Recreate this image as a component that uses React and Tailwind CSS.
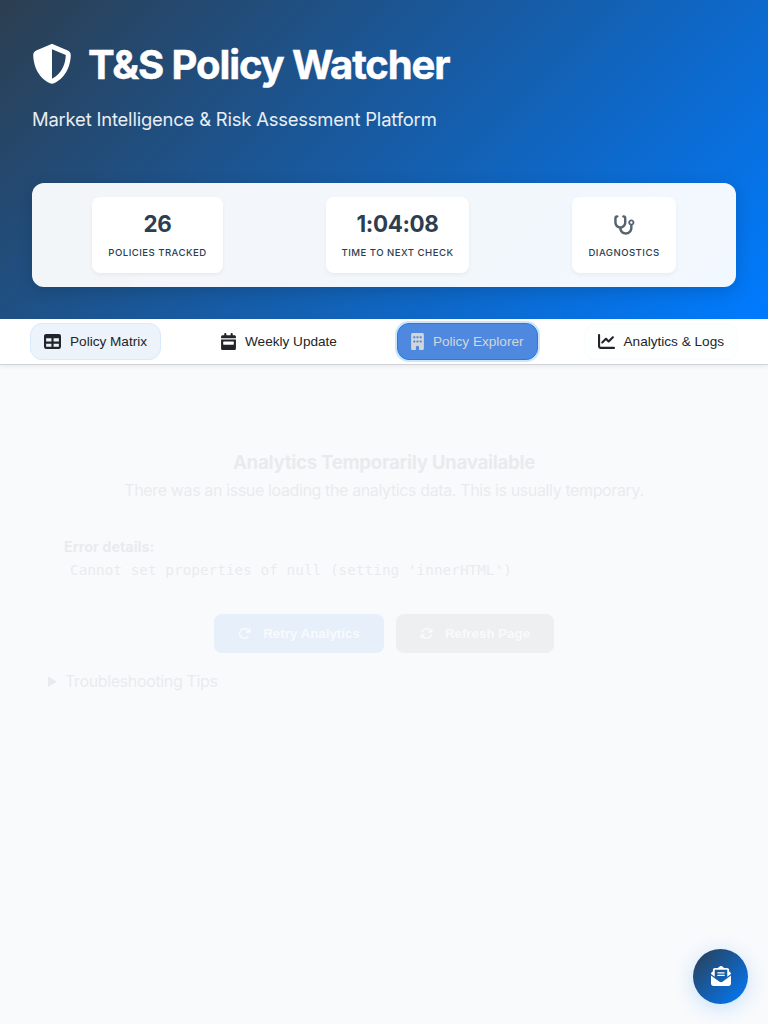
import {
  FaShieldHalved,
  FaStethoscope,
  FaTable,
  FaCalendarWeek,
  FaBuilding,
  FaChartLine,
  FaArrowRotateRight,
  FaArrowsRotate,
  FaEnvelopeOpenText,
} from "react-icons/fa6";

function Stat({ label, className, children }) {
  return (
    <div
      className={`flex h-[76px] flex-col items-center rounded-lg bg-white pt-[13px] shadow-[0_2px_4px_rgba(0,0,0,0.05)] ${className}`}
    >
      <div className="flex h-7 items-center text-[22.4px] leading-7 font-bold tracking-[-0.35px] text-[#2c3e50]">{children}</div>
      <div className="mt-[7px] text-[9.6px] leading-4 font-medium tracking-[0.46px] whitespace-nowrap text-[#2c3e50] uppercase">
        {label}
      </div>
    </div>
  );
}

function Tab({ icon: Icon, label, iconClass, className = "" }) {
  return (
    <button
      className={`flex h-[37px] items-center rounded-xl border px-[13px] font-['Liberation_Sans',Arial,sans-serif] text-[13.6px] ${className}`}
    >
      <Icon className={`mr-[9px] h-[17px] shrink-0 ${iconClass}`} />
      <span className="mt-0.5 whitespace-nowrap">{label}</span>
    </button>
  );
}

export default function App() {
  return (
    <div className="flex h-[1024px] w-full flex-col overflow-hidden bg-[#f8fafc] font-[Inter,sans-serif] text-[#212529]">
      <header className="h-[319px] shrink-0 bg-[linear-gradient(135deg,#2c3e50_0%,#007bff_100%)] px-8 pt-[39px] text-white">
        <h1 className="flex h-[50px] items-center text-[40px] leading-[50px] font-bold tracking-[-1.1px]">
          <FaShieldHalved className="mr-4 size-10" />
          <span className="mt-0.5 [-webkit-text-stroke:0.5px_white]">T&amp;S Policy Watcher</span>
        </h1>
        <p className="mt-4 text-[18.4px] leading-7 tracking-[-0.18px] opacity-90">
          Market Intelligence &amp; Risk Assessment Platform
        </p>
        <div className="mt-[50px] flex h-[104px] items-center justify-between rounded-xl bg-white/95 px-[60px] shadow-[0_4px_16px_rgba(0,0,0,0.15)]">
          <Stat label="Policies Tracked" className="w-[131px]">26</Stat>
          <Stat label="Time to Next Check" className="w-[143px]">1:04:08</Stat>
          <Stat label="Diagnostics" className="w-[104px]">
            <FaStethoscope className="mt-px h-[22px] w-[22px] opacity-80" />
          </Stat>
        </div>
      </header>

      <nav className="flex h-[46px] shrink-0 items-center justify-between border-b border-[#d0d3d6] bg-white px-[30px] shadow-[0_2px_4px_rgba(0,0,0,0.06)]">
        <Tab icon={FaTable} iconClass="w-[17px]" label="Policy Matrix" className="border-[#d9eafd] bg-[#edf3fb]" />
        <Tab icon={FaCalendarWeek} iconClass="w-[15px]" label="Weekly Update" className="border-transparent" />
        <Tab
          icon={FaBuilding}
          iconClass="w-[13px]"
          label="Policy Explorer"
          className="border-[#1a7df5] bg-[#4f89df] text-[#d3d5d8] shadow-[0_0_0_2px_#cfe5fa]"
        />
        <Tab icon={FaChartLine} iconClass="w-[17px]" label="Analytics & Logs" className="border-[#fafcfc] bg-[#fdfefe]" />
      </nav>

      <main className="px-12 pt-[84px] opacity-[0.065]">
        <h2 className="text-center text-[18.7px] leading-7 font-bold tracking-[-0.3px]">Analytics Temporarily Unavailable</h2>
        <p className="-mt-px text-center text-base leading-7 tracking-[-0.37px]">
          There was an issue loading the analytics data. This is usually temporary.
        </p>
        <div className="mt-8 px-4 text-[14.4px] leading-[22px]">
          <strong className="block font-bold">Error details:</strong>
          <code className="block pl-[6px] font-['DejaVu_Sans_Mono',monospace] text-[14.4px] leading-6">
            Cannot set properties of null (setting 'innerHTML')
          </code>
        </div>
        <div className="mt-8 flex justify-center gap-3 font-['Liberation_Sans',Arial,sans-serif] text-[13.33px] font-bold text-white">
          <button className="flex h-[39px] w-[170px] items-center justify-center rounded-lg bg-[#0066e0]">
            <FaArrowRotateRight className="mr-3 size-[13px]" />
            Retry Analytics
          </button>
          <button className="flex h-[39px] w-[158px] items-center justify-center rounded-lg bg-[#62605e]">
            <FaArrowsRotate className="mr-3 size-[13px]" />
            Refresh Page
          </button>
        </div>
        <details className="mt-[15px] text-base leading-[26px] tracking-[-0.35px]">
          <summary>Troubleshooting Tips</summary>
        </details>
      </main>

      <button
        aria-label="Subscribe"
        className="absolute top-[949px] left-[693px] flex size-[55px] items-center justify-center rounded-full bg-[linear-gradient(135deg,#2c3e50_0%,#007bff_100%)] pb-px text-white shadow-[0_4px_20px_rgba(0,123,255,0.2)]"
      >
        <FaEnvelopeOpenText className="size-5" />
      </button>
    </div>
  );
}
